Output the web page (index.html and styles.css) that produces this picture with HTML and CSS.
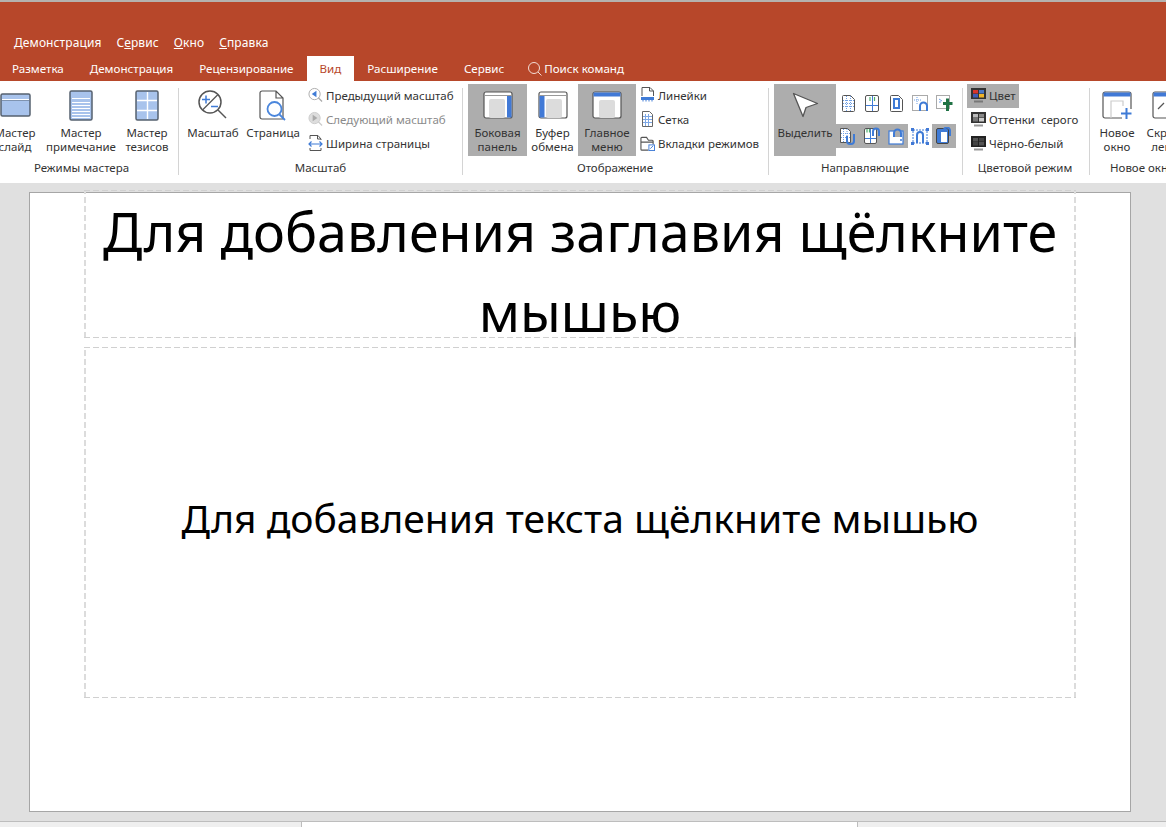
FILE: index.html
```html
<!DOCTYPE html>
<html lang="ru">
<head>
    <meta charset="UTF-8">
    <title>Презентация</title>
    <link rel="stylesheet" href="styles.css">
</head>
<body>
    <div class="topbar">
        <div class="menu">
            <span><u>Д</u>емонстрация</span>
            <span>С<u>е</u>рвис</span>
            <span><u>О</u>кно</span>
            <span><u>С</u>правка</span>
        </div>
        <div class="tabs">
            <span class="tab">Разметка</span>
            <span class="tab">Демонстрация</span>
            <span class="tab">Рецензирование</span>
            <span class="tab active">Вид</span>
            <span class="tab">Расширение</span>
            <span class="tab">Сервис</span>
            <span class="search">
                <svg width="16" height="16" viewBox="0 0 16 16"><circle cx="7" cy="7" r="5.5" fill="none" stroke="#f3dcd4"/><path d="M11 11l3.5 3.5" stroke="#f3dcd4"/></svg>
                Поиск команд
            </span>
        </div>
    </div>

    <div class="ribbon">
        <!-- Режимы мастера -->
        <div class="group group-master">
            <div class="group-body">
                <div class="btn w60">
                    <div class="btn-icon">
                        <svg width="31" height="24" viewBox="0 0 31 24"><rect x="1" y="1" width="29" height="22" rx="1.5" fill="#a8c3ec" stroke="#56616f" stroke-width="1.5"/><path d="M2 6.500h27" stroke="#fff"/><path d="M2 7.500h27" stroke="#7f93b0"/></svg>
                    </div>
                    <div class="btn-text">Мастер<br>слайд</div>
                </div>
                <div class="btn w72">
                    <div class="btn-icon">
                        <svg width="24" height="31" viewBox="0 0 24 31"><rect x="1" y="1" width="22" height="29" rx="1.5" fill="#a8c3ec" stroke="#56616f" stroke-width="1.5"/><path d="M3 8.500h18M3 12.500h18M3 15.500h18M3 18.500h18M3 21.500h18M3 24.500h18M3 27.500h18" stroke="#fff"/></svg>
                    </div>
                    <div class="btn-text">Мастер<br>примечание</div>
                </div>
                <div class="btn w60">
                    <div class="btn-icon">
                        <svg width="24" height="31" viewBox="0 0 24 31"><rect x="1" y="1" width="22" height="29" rx="1.5" fill="#a8c3ec" stroke="#56616f" stroke-width="1.5"/><path d="M2 10.500h20M2 20.500h20M12.500 2v27" stroke="#fff" stroke-width="1.4"/></svg>
                    </div>
                    <div class="btn-text">Мастер<br>тезисов</div>
                </div>
            </div>
            <div class="group-label">Режимы мастера</div>
        </div>
        <div class="sep"></div>

        <!-- Масштаб -->
        <div class="group group-zoom">
            <div class="group-body">
                <div class="btn w60">
                    <div class="btn-icon">
                        <svg width="30" height="30" viewBox="0 0 30 30"><circle cx="12" cy="12" r="11" fill="#fff" stroke="#555" stroke-width="1.500"/><path d="M4.500 20L20 4.500" stroke="#555" stroke-width="1.300"/><path d="M20 20l8 8" stroke="#555" stroke-width="1.500"/><path d="M4 9.500h8M8 5.500v8" stroke="#3f7bd6" stroke-width="1.500"/><path d="M13 16.500h7" stroke="#3f7bd6" stroke-width="1.500"/></svg>
                    </div>
                    <div class="btn-text">Масштаб</div>
                </div>
                <div class="btn w60">
                    <div class="btn-icon">
                        <svg width="28" height="31" viewBox="0 0 28 31"><path d="M3 1h14l7 7v21H3a2 2 0 0 1-2-2V3a2 2 0 0 1 2-2zM17 1v7h7" fill="#fff" stroke="#555" stroke-width="1.200"/><circle cx="15.500" cy="19" r="7" fill="#fff" stroke="#4a86dc" stroke-width="1.800"/><path d="M20.500 24.500l5.500 5.500" stroke="#4a86dc" stroke-width="1.800"/></svg>
                    </div>
                    <div class="btn-text">Страница</div>
                </div>
                <div class="rows w159">
                    <div class="row">
                        <svg class="row-icon" width="15" height="16" viewBox="0 0 16 16"><circle cx="7" cy="7" r="6" fill="#fff" stroke="#aaa"/><path d="M4 7l5-3.500v7z" fill="#3f7bd6"/><path d="M11 11l4 4" stroke="#aaa" stroke-width="1.400"/></svg>
                        Предыдущий масштаб
                    </div>
                    <div class="row disabled">
                        <svg class="row-icon" width="15" height="16" viewBox="0 0 16 16"><circle cx="7" cy="7" r="6" fill="#ddd" stroke="#ccc"/><path d="M10 7L5 3.500v7z" fill="#aaa"/><path d="M11 11l4 4" stroke="#ccc" stroke-width="1.400"/></svg>
                        Следующий масштаб
                    </div>
                    <div class="row">
                        <svg class="row-icon" width="15" height="18" viewBox="0 0 15 18"><path d="M2 5V1.500h8l3 3.500v1M2 14v2.500h11V14M9.500 1.500V5H13" fill="none" stroke="#555"/><path d="M1 10h13M3.500 7.500L1 10l2.500 2.500M11.500 7.500L14 10l-2.500 2.500" fill="none" stroke="#3f7bd6" stroke-width="1.200"/></svg>
                        Ширина страницы
                    </div>
                </div>
            </div>
            <div class="group-label">Масштаб</div>
        </div>
        <div class="sep"></div>

        <!-- Отображение -->
        <div class="group group-show">
            <div class="group-body">
                <div class="btn w59 on">
                    <div class="btn-icon">
                        <svg width="30" height="28" viewBox="0 0 30 28"><rect x="1" y="1" width="28" height="26" rx="2" fill="#fff" stroke="#555" stroke-width="1.200"/><path d="M1.600 4.500h27" stroke="#999"/><rect x="6" y="8" width="16" height="19" rx="2" fill="#dcdcdc"/><rect x="24" y="5" width="4.500" height="21.500" fill="#4179d6"/></svg>
                    </div>
                    <div class="btn-text">Боковая<br>панель</div>
                </div>
                <div class="btn w51">
                    <div class="btn-icon">
                        <svg width="30" height="28" viewBox="0 0 30 28"><rect x="1" y="1" width="28" height="26" rx="2" fill="#fff" stroke="#555" stroke-width="1.200"/><path d="M1.600 4.500h27" stroke="#999"/><rect x="8" y="8" width="16" height="19" rx="2" fill="#dcdcdc"/><rect x="1.500" y="5" width="5" height="21.500" fill="#4179d6"/></svg>
                    </div>
                    <div class="btn-text">Буфер<br>обмена</div>
                </div>
                <div class="btn w58 on">
                    <div class="btn-icon">
                        <svg width="30" height="28" viewBox="0 0 30 28"><rect x="1" y="1" width="28" height="26" rx="2" fill="#fff" stroke="#555" stroke-width="1.200"/><rect x="1.500" y="1.500" width="27" height="4" fill="#4179d6"/><rect x="7" y="9" width="16" height="18" rx="2" fill="#dcdcdc"/></svg>
                    </div>
                    <div class="btn-text">Главное<br>меню</div>
                </div>
                <div class="rows w132">
                    <div class="row">
                        <svg class="row-icon" width="15" height="16" viewBox="0 0 15 16"><path d="M2 9V.500h8l3.500 3.500v5M9.500.500V4h4" fill="none" stroke="#555"/><rect x="1" y="10" width="13" height="3" fill="#3f7bd6"/><path d="M3 13v1.500M6 13v1.500M9 13v1.500M12 13v1.500" stroke="#3f7bd6"/></svg>
                        Линейки
                    </div>
                    <div class="row">
                        <svg class="row-icon" width="15" height="16" viewBox="0 0 15 16"><path d="M2.500.500h7l3 3v12h-10z" fill="#fff" stroke="#666"/><path d="M3 5.500h9M3 8.500h9M3 11.500h9M5.500 3v12M8.500 3v12" stroke="#7ea8e6"/></svg>
                        Сетка
                    </div>
                    <div class="row">
                        <svg class="row-icon" width="15" height="15" viewBox="0 0 16 16"><path d="M1 4.500V14a1 1 0 0 0 1 1h7M1 4.500V2.500a1 1 0 0 1 1-1h5l2 3h4a1 1 0 0 1 1 1V9M1 6.500h13" fill="none" stroke="#555" stroke-width="1.200"/><rect x="9.500" y="9.500" width="6" height="6" fill="#fff" stroke="#3f7bd6"/><path d="M11 13.500l3-3" stroke="#3f7bd6"/></svg>
                        Вкладки режимов
                    </div>
                </div>
            </div>
            <div class="group-label">Отображение</div>
        </div>
        <div class="sep"></div>

        <!-- Направляющие -->
        <div class="group group-guides">
            <div class="group-body">
                <div class="btn w62 on">
                    <div class="btn-icon">
                        <svg width="27" height="26" viewBox="0 0 27 26"><path d="M1.500 1.500L25.500 11.500 14 15.500 11 24.500z" fill="#fff" stroke="#555" stroke-width="1.300" stroke-linejoin="round"/></svg>
                    </div>
                    <div class="btn-text">Выделить</div>
                </div>
                <div class="guides">
                    <div class="cell">
                        <svg width="13" height="17" viewBox="0 0 13 17"><path d="M1.500.500h7l4 4v11a1 1 0 0 1-1 1h-10a1 1 0 0 1-1-1v-14a1 1 0 0 1 1-1z" fill="#fff" stroke="#555"/><path d="M1 5.500h11M1 8.500h11M1 11.500h11M4.500 1v15M8.500 1v15" stroke="#6f9fe4" stroke-dasharray="1 1"/></svg>
                    </div>
                    <div class="cell">
                        <svg width="14" height="17" viewBox="0 0 14 17"><rect x=".5" y=".5" width="13" height="16" rx="1.500" fill="#fff" stroke="#555"/><path d="M7.500 1v15M1 10.500h12" stroke="#3f7bd6"/><path d="M5 2v4M9.500 2v4" stroke="#4caf70" stroke-width="1.200"/></svg>
                    </div>
                    <div class="cell">
                        <svg width="13" height="17" viewBox="0 0 13 17"><path d="M1.500.500h7l4 4v11a1 1 0 0 1-1 1h-10a1 1 0 0 1-1-1v-14a1 1 0 0 1 1-1z" fill="#fff" stroke="#555"/><rect x="4" y="4" width="5" height="9" fill="#fff" stroke="#3f7bd6" stroke-width="2"/></svg>
                    </div>
                    <div class="cell">
                        <svg width="17" height="17" viewBox="0 0 17 17"><rect x=".5" y=".5" width="15" height="15" fill="#fff" stroke="#aaa"/><path d="M2 5h7M5 2v7" stroke="#6f9fe4" stroke-dasharray="1 1"/><path d="M8 16v-5a3.500 3.500 0 0 1 7 0v5" fill="none" stroke="#3f7bd6" stroke-width="2"/></svg>
                    </div>
                    <div class="cell">
                        <svg width="17" height="17" viewBox="0 0 17 17"><rect x=".5" y=".5" width="13" height="13" fill="#fff" stroke="#aaa"/><path d="M3 4l3 2M3 7h2" stroke="#6f9fe4"/><path d="M7 7h3V3.500h3V7h3.500v3H13v6h-3v-6H7z" fill="#217346"/></svg>
                    </div>
                    <div class="cell on">
                        <svg width="18" height="18" viewBox="0 0 18 18"><path d="M1.500 1.500h7l3 3v11h-10z" fill="#fff" stroke="#555"/><path d="M2 6.500h9M2 10.500h9M4.500 2v13M8 2v13" stroke="#6f9fe4" stroke-dasharray="1 1"/><path d="M8 9v5a3 3 0 0 0 3 3h1a3 3 0 0 0 3-3V7" fill="none" stroke="#3f7bd6" stroke-width="2"/></svg>
                    </div>
                    <div class="cell on">
                        <svg width="17" height="18" viewBox="0 0 17 18"><rect x=".5" y="1.500" width="12" height="15" rx="1.500" fill="#fff" stroke="#555"/><path d="M6.500 2v14M1 11.500h11" stroke="#3f7bd6"/><path d="M3 2v3.500M5.500 2v3.500" stroke="#4caf70" stroke-width="1.200"/><path d="M9 9V4.500a3 3 0 0 1 6 0V9" fill="none" stroke="#3f7bd6" stroke-width="2"/></svg>
                    </div>
                    <div class="cell on">
                        <svg width="17" height="17" viewBox="0 0 17 17"><rect x="1" y="3" width="14" height="13" fill="#fff" stroke="#3f7bd6" stroke-width="1.200"/><path d="M6 9V5a3.500 3.500 0 0 1 7 0v4" fill="#adadad" stroke="#3f7bd6" stroke-width="2"/><path d="M13 11v2" stroke="#3f7bd6" stroke-width="1.500"/></svg>
                    </div>
                    <div class="cell">
                        <svg width="18" height="17" viewBox="0 0 18 17"><rect x="2" y="2" width="14" height="13" fill="none" stroke="#3f7bd6" stroke-dasharray="2 1"/><path d="M6 15V7a3 3 0 0 1 6 0v8" fill="none" stroke="#3f7bd6" stroke-width="2"/><path d="M0 0h3v3H0zM15 0h3v3h-3zM0 14h3v3H0zM15 14h3v3h-3z" fill="#4179d6"/></svg>
                    </div>
                    <div class="cell on">
                        <svg width="16" height="18" viewBox="0 0 16 18"><rect x=".5" y="1.500" width="12" height="15" rx="1.500" fill="#3f7bd6" stroke="#444"/><rect x="5" y="5" width="6" height="10" fill="#fff"/><path d="M8 5V3.500a3 3 0 0 1 6 0V9" fill="none" stroke="#3f7bd6" stroke-width="2"/></svg>
                    </div>
                </div>
            </div>
            <div class="group-label">Направляющие</div>
        </div>
        <div class="sep"></div>

        <!-- Цветовой режим -->
        <div class="group group-color">
            <div class="group-body">
                <div class="rows w122">
                    <div class="row fit on">
                        <svg class="row-icon" width="15" height="15" viewBox="0 0 15 15"><rect x=".5" y=".5" width="14" height="10" fill="#333" stroke="#333"/><rect x="2" y="2" width="5" height="3.500" fill="#d8342c"/><rect x="8" y="2" width="5" height="3.500" fill="#4a78c8"/><rect x="2" y="6" width="5" height="3.500" fill="#3f5bb5"/><rect x="8" y="6" width="5" height="3.500" fill="#f0b429"/><path d="M3 13.500h9" stroke="#777" stroke-width="2"/></svg>
                        Цвет
                    </div>
                    <div class="row">
                        <svg class="row-icon" width="15" height="15" viewBox="0 0 15 15"><rect x=".5" y=".5" width="14" height="10" fill="#333" stroke="#333"/><rect x="2" y="2" width="5" height="3.500" fill="#bbb"/><rect x="8" y="2" width="5" height="3.500" fill="#888"/><rect x="2" y="6" width="5" height="3.500" fill="#777"/><rect x="8" y="6" width="5" height="3.500" fill="#ccc"/><path d="M3 13.500h9" stroke="#999" stroke-width="2"/></svg>
                        Оттенки&nbsp; серого
                    </div>
                    <div class="row">
                        <svg class="row-icon" width="15" height="15" viewBox="0 0 15 15"><rect x=".5" y=".5" width="14" height="10" fill="#222" stroke="#222"/><rect x="2" y="2" width="5" height="3.500" fill="#555"/><rect x="8" y="2" width="5" height="3.500" fill="#444"/><rect x="2" y="6" width="5" height="3.500" fill="#444"/><rect x="8" y="6" width="5" height="3.500" fill="#555"/><path d="M3 13.500h9" stroke="#999" stroke-width="2"/></svg>
                        Чёрно-белый
                    </div>
                </div>
            </div>
            <div class="group-label">Цветовой режим</div>
        </div>
        <div class="sep"></div>

        <!-- Новое окно -->
        <div class="group group-window">
            <div class="group-body">
                <div class="btn w54">
                    <div class="btn-icon">
                        <svg width="30" height="28" viewBox="0 0 30 28"><path d="M20 27H3a2 2 0 0 1-2-2V3a2 2 0 0 1 2-2h24a2 2 0 0 1 2 2v15" fill="#fff" stroke="#555" stroke-width="1.200"/><rect x="1.500" y="1.500" width="27" height="4" fill="#4179d6"/><path d="M9 27V10h12v5" fill="none" stroke="#ccc" stroke-width="1.200"/><path d="M19 22.500h10.500M24.500 17v11" stroke="#3f7bd6" stroke-width="2"/></svg>
                    </div>
                    <div class="btn-text">Новое<br>окно</div>
                </div>
                <div class="btn w46">
                    <div class="btn-icon">
                        <svg width="30" height="28" viewBox="0 0 30 28"><rect x="1" y="1" width="28" height="26" rx="2" fill="#fff" stroke="#555" stroke-width="1.200"/><rect x="1.500" y="1.500" width="27" height="4" fill="#4179d6"/><path d="M6 18l6-6" stroke="#555" stroke-width="1.200"/></svg>
                    </div>
                    <div class="btn-text">Скрыть<br>ленту</div>
                </div>
            </div>
            <div class="group-label">Новое окно</div>
        </div>
    </div>

    <div class="workspace">
        <div class="slide">
            <div class="placeholder ph-title">Для добавления заглавия щёлкните мышью</div>
            <div class="ph-join"></div>
            <div class="placeholder ph-body">Для добавления текста щёлкните мышью</div>
        </div>
    </div>

    <div class="statusbar">
        <div class="status-side left"></div>
        <div class="status-mid"></div>
        <div class="status-side"></div>
    </div>
</body>
</html>
```

FILE: styles.css
```css
html, body {
    margin: 0;
    height: 827px;
    overflow: hidden;
}
body {
    font-family: "Noto Sans", sans-serif;
    font-size: 11.5px;
    color: #333;
    background-color: #e0e0e0;
}

/* top */
.topbar {
    height: 79px;
    border-top: 2px solid #b5b2ae;
    background-color: #b7472a;
    color: #fff;
    display: flex;
    flex-direction: column;
    justify-content: flex-end;
}
.menu {
    display: flex;
    gap: 15px;
    padding-left: 14px;
    font-size: 12px;
    letter-spacing: 0.1px;
    line-height: 16px;
    margin-bottom: 5px;
}
.tabs {
    display: flex;
    height: 25px;
    font-size: 11.6px;
    line-height: 26px;
    margin-left: -1px;
}
.tab {
    padding: 0 13px;
}
.tab.active {
    background-color: #fff;
    color: #b7472a;
}
.search {
    display: flex;
    align-items: center;
    gap: 1px;
    margin-left: 10px;
}

/* ribbon */
.ribbon {
    display: flex;
    height: 99px;
    padding-top: 3px;
    background-color: #fff;
    overflow: hidden;
}
.group {
    flex: none;
    display: flex;
    flex-direction: column;
}
.group-body {
    display: flex;
    height: 72px;
}
.group-label {
    margin-top: 4px;
    line-height: 16px;
    text-align: center;
}
.sep {
    flex: none;
    width: 1px;
    height: 87px;
    margin-top: 4px;
    background-color: #d4d4d4;
}
.group-master { margin-left: -15px; width: 193px; }
.group-zoom { width: 283px; padding-left: 4px; box-sizing: border-box; }
.group-show { width: 305px; padding-left: 5px; box-sizing: border-box; }
.group-guides { width: 193px; padding-left: 5px; box-sizing: border-box; }
.group-color { width: 126px; padding-left: 4px; box-sizing: border-box; }
.group-window { width: 100px; }
.group-zoom .group-label { padding-right: 4px; }
.group-show .group-label,
.group-guides .group-label,
.group-color .group-label { padding-right: 6px; }
.group-window .group-label { text-align: left; padding-left: 20px; white-space: nowrap; }

.btn {
    flex: none;
    text-align: center;
}
.btn-icon {
    height: 42px;
    display: flex;
    align-items: center;
    justify-content: center;
}
.btn-text {
    line-height: 14px;
    white-space: nowrap;
}
.on {
    background-color: #adadad;
}
.w46 { width: 46px; }
.w51 { width: 51px; }
.w54 { width: 54px; }
.w58 { width: 58px; }
.w59 { width: 59px; }
.w60 { width: 60px; }
.w62 { width: 62px; }
.w72 { width: 72px; }
.w122 { width: 122px; }
.w132 { width: 132px; }
.w159 { width: 159px; }

.rows {
    flex: none;
    display: flex;
    flex-direction: column;
}
.row {
    display: flex;
    align-items: center;
    box-sizing: border-box;
    height: 24px;
    padding-left: 4px;
    padding-bottom: 2px;
    white-space: nowrap;
}
.group-zoom .row {
    padding-left: 5px;
}
.row.fit {
    align-self: flex-start;
    padding-right: 3px;
}
.row.disabled {
    color: #8a8a8a;
}
.row-icon {
    flex: none;
    margin-right: 3px;
}

.guides {
    display: grid;
    grid-template-columns: repeat(5, 24px);
    grid-auto-rows: 24px;
    row-gap: 9px;
    padding-top: 7px;
}
.cell {
    display: flex;
    align-items: center;
    justify-content: center;
}

/* slide */
.workspace {
    height: 629px;
    padding: 9px 0 0 29px;
    background-color: #e0e0e0;
}
.slide {
    position: relative;
    box-sizing: border-box;
    width: 1102px;
    height: 620px;
    background-color: #fff;
    border: 1px solid #a6a6a6;
}
.placeholder {
    position: absolute;
    left: 54px;
    width: 992px;
    box-sizing: border-box;
    color: #000;
    text-align: center;
    background:
        repeating-linear-gradient(90deg, #d0d0d0 0 6px, transparent 6px 9px) left top / 100% 1px no-repeat,
        repeating-linear-gradient(90deg, #d0d0d0 0 6px, transparent 6px 9px) left bottom / 100% 1px no-repeat,
        repeating-linear-gradient(0deg, #dcdcdc 0 6px, transparent 6px 9px) left top / 2px 100% no-repeat,
        repeating-linear-gradient(0deg, #dcdcdc 0 6px, transparent 6px 9px) right top / 2px 100% no-repeat;
}
.ph-title {
    top: -3px;
    height: 148px;
    padding-top: 1px;
    font-size: 53.8px;
    line-height: 80px;
}
.ph-join {
    position: absolute;
    left: 1044px;
    top: 144px;
    width: 2px;
    height: 11px;
    background-color: #c8c8c8;
}
.ph-body {
    top: 154px;
    height: 351px;
    font-size: 39px;
    display: flex;
    align-items: center;
    justify-content: center;
    padding-bottom: 11px;
}

/* status */
.statusbar {
    display: flex;
    height: 5px;
    border-top: 1px solid #bdbdbd;
    background-color: #efefef;
}
.status-side {
    flex: 1;
}
.status-side.left {
    flex: none;
    width: 301px;
}
.status-mid {
    width: 555px;
    background-color: #fff;
    border-left: 1px solid #bdbdbd;
    border-right: 1px solid #bdbdbd;
}
```
